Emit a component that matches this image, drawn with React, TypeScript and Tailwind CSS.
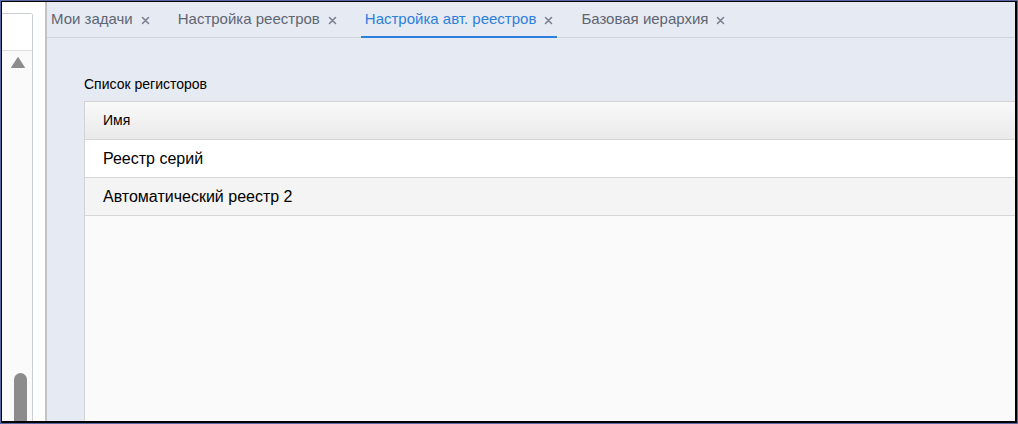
const tabs = [
  { label: 'Мои задачи', active: false },
  { label: 'Настройка реестров', active: false },
  { label: 'Настройка авт. реестров', active: true },
  { label: 'Базовая иерархия', active: false },
];

const rows = ['Реестр серий', 'Автоматический реестр 2'];

function CloseIcon() {
  return (
    <svg width="9" height="9" viewBox="0 0 9 9" className="mt-[2px]">
      <path d="M1.5 1.5 L7.5 7.5 M7.5 1.5 L1.5 7.5" stroke="#7b8190" strokeWidth="1.6" strokeLinecap="round" />
    </svg>
  );
}

export default function App() {
  return (
    <div className="w-[1018px] h-[424px] border border-[#5a69a3] font-['Liberation_Sans',Arial,sans-serif]">
      <div className="w-full h-full border-l border-t border-r-2 border-b-2 border-black flex bg-white overflow-hidden">
        {/* Left rail */}
        <div className="w-[43px] shrink-0 flex bg-white">
          <div className="w-[31px] mt-[11px] border-r border-t border-[#c9ced8] rounded-tr-[3px] bg-[#fafafa] flex flex-col">
            <div className="h-[37px] border-b border-[#dcdcdc] bg-white" />
            <div className="flex justify-center pl-[1px] pt-[6px]">
              <svg width="14" height="11" viewBox="0 0 14 11">
                <path d="M7 0.5 L13.5 10.5 L0.5 10.5 Z" fill="#8c8c8c" strokeLinejoin="round" stroke="#8c8c8c" strokeWidth="1" />
              </svg>
            </div>
            <div className="flex-1" />
            <div className="ml-[12px] w-[13px] h-[48px] rounded-t-full bg-[#8c8c8c]" />
          </div>
        </div>
        <div className="w-[2px] shrink-0 bg-[#c3c3c3]" />

        {/* Main */}
        <div className="flex-1 flex flex-col bg-[#e6eaf2] min-w-0">
          <div className="h-[36px] shrink-0 flex border-b border-[#cfd3da]">
            {tabs.map(t => (
              <div
                key={t.label}
                className={`h-[36px] flex items-center gap-[8px] px-[4px] mr-[20px] -mb-px border-b-2 text-[15px] ${t.active ? 'border-[#2d7fdc] text-[#2d7fdc]' : 'border-transparent text-[#5e6573]'}`}
              >
                <span>{t.label}</span>
                <CloseIcon />
              </div>
            ))}
          </div>

          <div className="flex-1 flex flex-col pl-[37px] pt-[38px] min-h-0">
            <div className="text-[14px] text-black leading-[16px] mb-[9px]">Список регисторов</div>
            <div className="flex-1 border-l border-t border-[#d3d3d3] bg-[#fafafa] flex flex-col">
              <div className="h-[38px] shrink-0 flex items-center pl-[18px] text-[14px] text-black bg-gradient-to-b from-[#f9f9f9] to-[#eaeaea] border-b border-[#d6d6d6]">
                Имя
              </div>
              {rows.map((r, i) => (
                <div
                  key={r}
                  className={`h-[38px] shrink-0 flex items-center pl-[18px] text-[16px] text-black border-b border-[#d6d6d6] ${i % 2 === 0 ? 'bg-white' : 'bg-[#f4f4f4]'}`}
                >
                  {r}
                </div>
              ))}
            </div>
          </div>
        </div>
      </div>
    </div>
  );
}
